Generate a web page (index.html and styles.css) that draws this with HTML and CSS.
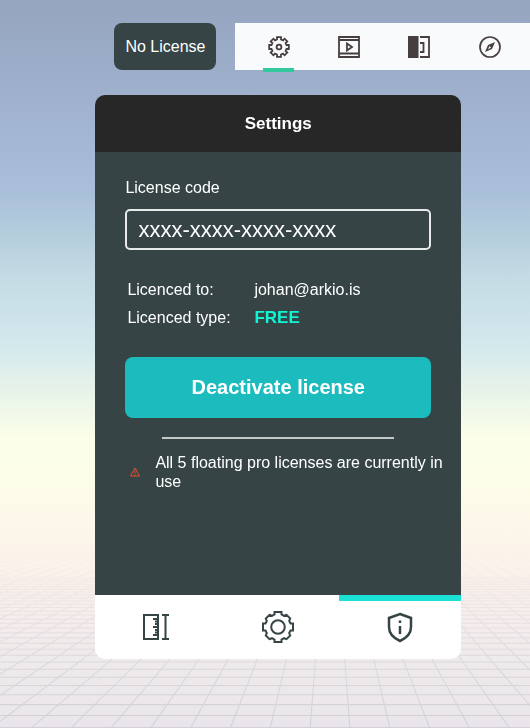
FILE: index.html
```html
<!DOCTYPE html>
<html lang="en">
<head>
  <meta charset="UTF-8" />
  <meta name="viewport" content="width=device-width, initial-scale=1.0"/>
  <title>Settings</title>
  <link rel="stylesheet" href="styles.css">
</head>
<body>
  <svg class="floor" viewBox="0 0 530 254" preserveAspectRatio="xMidYMax slice" aria-hidden="true">
    <path id="floorLines" d=""/>
  </svg>

  <header class="topbar">
    <button class="license-btn">No License</button>
    <nav class="tools">
      <a href="#settings" class="active" aria-label="Settings">
        <svg width="24" height="24" viewBox="-12 -12 24 24" stroke-width="1.8">
          <path d="M-2-7.5V-9.8H2V-7.5L4-6.6L5.6-8.3L8.3-5.6L6.6-4L7.5-2H9.8V2H7.5L6.6 4L8.3 5.6L5.6 8.3L4 6.6L2 7.5V9.8H-2V7.5L-4 6.6L-5.6 8.3L-8.3 5.6L-6.6 4L-7.5 2H-9.8V-2H-7.5L-6.6-4L-8.3-5.6L-5.6-8.3L-4-6.6Z"/>
          <circle r="2.4"/>
        </svg>
      </a>
      <a href="#play" aria-label="Presentation">
        <svg width="24" height="24" viewBox="0 0 24 24" stroke-width="1.8">
          <path d="M2 2H22V22H2ZM2 5H22M2 18.5H22"/>
          <path d="M10 8.5V15.5L15 12Z"/>
        </svg>
      </a>
      <a href="#panel" aria-label="Side panel">
        <svg width="24" height="24" viewBox="0 0 24 24" stroke-width="1.8">
          <path class="solid" d="M1 1H11.5V23H1Z"/>
          <path d="M13 2H22V22H13M13 8H16.5V17H13"/>
        </svg>
      </a>
      <a href="#explore" aria-label="Explore">
        <svg width="24" height="24" viewBox="0 0 24 24" stroke-width="1.7">
          <circle cx="12" cy="12" r="10"/>
          <path class="solid" fill-rule="evenodd" d="M17 7L14 14L7 17L10 10ZM11.5 11L10 14.2L13 12.8Z"/>
        </svg>
      </a>
    </nav>
  </header>

  <main class="panel">
    <h1>Settings</h1>
    <form class="content">
      <label for="code">License code</label>
      <input type="text" id="code" value="xxxx-xxxx-xxxx-xxxx">

      <dl>
        <dt>Licenced to:</dt>
        <dd>johan@arkio.is</dd>
        <dt>Licenced type:</dt>
        <dd class="free">FREE</dd>
      </dl>

      <button type="button" class="deactivate-btn">Deactivate license</button>
      <hr>

      <div class="warning">
        <svg width="12" height="12" viewBox="0 0 12 12">
          <path d="M6 2L10.5 10H1.5ZM6 4.5V7.5M6 8.2V9.5"/>
        </svg>
        <p>All 5 floating pro licenses are currently in use</p>
      </div>
    </form>

    <nav class="tabs">
      <a href="#units" aria-label="Units">
        <svg width="36" height="36" viewBox="0 0 36 36" stroke-width="2">
          <path d="M6 6H20V30H6Z"/>
          <path d="M15 10H20M17 12.5H20M17 15H20M15 18H20M17 21H20M17 23.5H20M15 26H20"/>
          <path d="M24 6H31M27.5 6V30M24 30H31"/>
        </svg>
      </a>
      <a href="#general" aria-label="General">
        <svg width="36" height="36" viewBox="-18 -18 36 36" stroke-width="2">
          <path d="M-3.5-12.5V-15H3.5V-12.5L6-11.2L8.5-12.2L12.2-8.5L11.2-6L12.5-3.5H15V3.5H12.5L11.2 6L12.2 8.5L8.5 12.2L6 11.2L3.5 12.5V15H-3.5V12.5L-6 11.2L-8.5 12.2L-12.2 8.5L-11.2 6L-12.5 3.5H-15V-3.5H-12.5L-11.2-6L-12.2-8.5L-8.5-12.2L-6-11.2Z"/>
          <circle r="6.8"/>
        </svg>
      </a>
      <a href="#license" class="active" aria-label="License">
        <svg width="36" height="36" viewBox="0 0 36 36" stroke-width="2.5">
          <path d="M18 5L29 9V18Q29 27 18 32Q7 27 7 18V9Z"/>
          <path d="M18 17V25M18 11.5V14"/>
        </svg>
      </a>
    </nav>
  </main>

  <script src="floor.js"></script>
</body>
</html>
```
FILE: floor.js
```js
// perspective grid, vanishing point at the top of the svg
const vx = 330;
const bottom = 254;
let d = "";

for (let i = -40; i <= 40; i++) {
  const x = vx - 20 + i * 39.7;
  d += `M${vx} 0L${x.toFixed(1)} ${bottom}`;
}

for (let n = 0; n < 30; n++) {
  const y = 1 / (0.00394 + n * 0.000195);
  d += `M-400 ${y.toFixed(1)}H930`;
}

document.getElementById("floorLines").setAttribute("d", d);
```
FILE: styles.css
```css
* {
  box-sizing: border-box;
}

body {
  font-family: "Liberation Sans", Arial, sans-serif;
  font-size: 16px;
  margin: 0;
  min-height: 100vh;
  color: #fff;
  background: linear-gradient(#95a5c0, #9fb1cd 14%, #a9bfda 26%, #b4cddc 32%, #c5dbe4 38%, #d2e8ed 47%, #e5f2ea 53%, #fbfee8 60%, #fcfee9 65%, #fdf7e9 72%, #fbf1eb 79%, #f0ebeb 89%, #e9e5ea);
}

svg {
  fill: none;
  display: block;
}

.floor {
  position: fixed;
  left: 0;
  bottom: 0;
  width: 100%;
  height: 35%;
  z-index: -1;
  stroke: #d3d1d7;
  stroke-width: 1;
  -webkit-mask-image: linear-gradient(transparent 30%, #000 95%);
  mask-image: linear-gradient(transparent 30%, #000 95%);
}

.topbar {
  display: flex;
  gap: 19px;
  margin-left: 18%;
  padding: 23px 0 0 19px;
}

.license-btn {
  padding: 0 11px;
  height: 47px;
  font: inherit;
  color: #fff;
  background: #364445;
  border: none;
  border-radius: 8px;
  white-space: nowrap;
}

.tools {
  flex: 1;
  display: flex;
  padding: 0 5px 0 8px;
  background: #f8fafc;
}

.tools a {
  flex: 1;
  display: flex;
  align-items: center;
  justify-content: center;
  position: relative;
  stroke: #473e3f;
}

.tools a.active::after {
  content: "";
  position: absolute;
  bottom: -2px;
  width: 31px;
  height: 4px;
  background: #34c89d;
}

.solid {
  fill: #473e3f;
  stroke: none;
}

.panel {
  margin: 25px 13% 69px 18%;
  border-radius: 10px;
  overflow: hidden;
}

h1 {
  margin: 0;
  font-size: 17px;
  line-height: 57px;
  text-align: center;
  background: #272727;
}

.content {
  min-height: 443px;
  padding: 26px 30px 0;
  background: #364445;
}

label {
  display: block;
  line-height: 20px;
}

input {
  display: block;
  width: 100%;
  height: 41px;
  margin-top: 11px;
  padding: 0 11px;
  font: inherit;
  font-size: 22px;
  color: #fff;
  background: none;
  border: 2px solid #e6eae9;
  border-radius: 5px;
}

dl {
  display: grid;
  grid-template-columns: 127px 1fr;
  margin: 26px 0 0 2px;
  line-height: 28px;
}

dd {
  margin: 0;
}

.free {
  font-size: 17px;
  font-weight: bold;
  color: #0ff5d4;
}

.deactivate-btn {
  display: block;
  width: 100%;
  height: 61px;
  margin-top: 25px;
  font: inherit;
  font-size: 20px;
  font-weight: bold;
  color: #fff;
  background: #1cbbbe;
  border: none;
  border-radius: 8px;
}

hr {
  height: 2px;
  margin: 19px 12% 14px;
  border: none;
  background: #c3cbc9;
}

.warning {
  display: flex;
  align-items: center;
  gap: 14px;
  margin: 0 -20px 0 4px;
  line-height: 19px;
}

.warning svg {
  flex: none;
  stroke: #e4502e;
}

.warning p {
  margin: 0;
}

.tabs {
  display: flex;
  height: 64px;
  background: #fff;
}

.tabs a {
  flex: 1;
  display: flex;
  align-items: center;
  justify-content: center;
  stroke: #364445;
}

.tabs a.active {
  box-shadow: inset 0 6px #1be0d5;
}
```
